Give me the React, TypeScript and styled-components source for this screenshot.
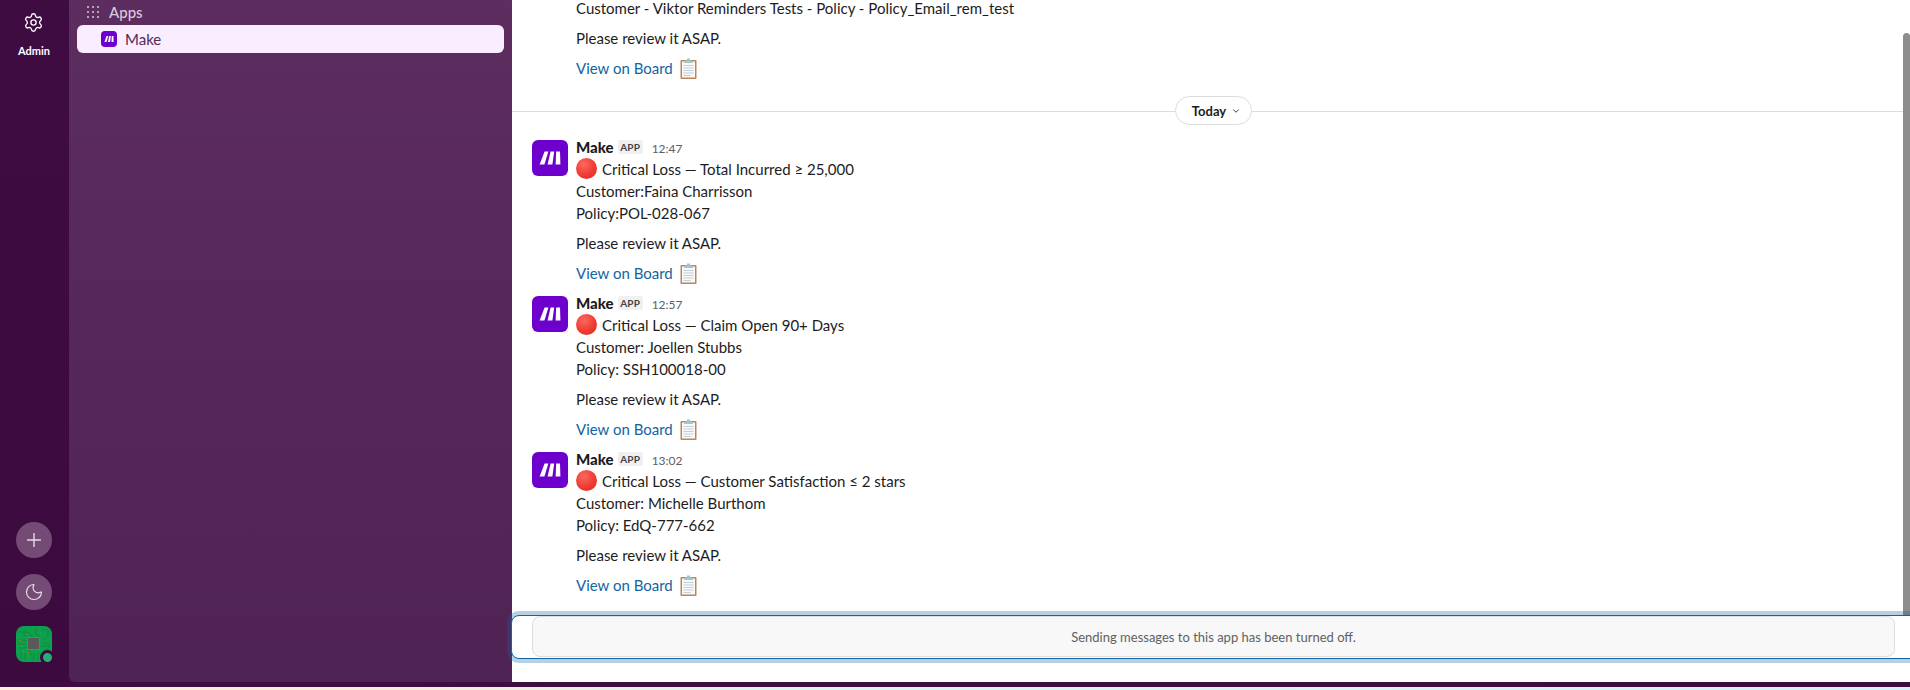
import React from 'react';
import styled, { createGlobalStyle } from 'styled-components';
import { Settings, Plus, Moon, ChevronDown } from 'lucide-react';

const GlobalStyle = createGlobalStyle`
  html, body {
    margin: 0;
    padding: 0;
    height: 100%;
    overflow: hidden;
    background: #fff;
  }
  * { box-sizing: border-box; }
  #root { height: 100%; }
`;

const Page = styled.div`
  width: 1910px;
  height: 690px;
  display: flex;
  flex-direction: column;
  overflow: hidden;
  font-family: Lato, 'Noto Sans', sans-serif;
  color: #1d1c1d;
  font-size: 15px;
`;

const Workspace = styled.div`
  height: 682px;
  flex: none;
  display: flex;
  background: linear-gradient(180deg, #3f0c41 0%, #3d0a3f 100%);
`;

const BottomEdge = styled.div`
  height: 5px;
  flex: none;
  background: #3f0c41;
`;

const BrowserEdge = styled.div`
  flex: 1;
  background: linear-gradient(90deg, #fdeedd 0%, #f4ecdc 22%, #dcf3ee 40%, #d6f2f6 100%);
`;

const Rail = styled.nav`
  width: 69px;
  flex: none;
  display: flex;
  flex-direction: column;
  align-items: center;
  padding: 12px 1px 20px 0;
`;

const RailItem = styled.div`
  display: flex;
  flex-direction: column;
  align-items: center;
  gap: 11px;
  color: #fff;
  font-size: 11px;
  font-weight: 700;
  line-height: 13px;
`;

const RailBottom = styled.div`
  margin-top: auto;
  display: flex;
  flex-direction: column;
  align-items: center;
  gap: 16px;
`;

const RoundButton = styled.div`
  width: 36px;
  height: 36px;
  border-radius: 50%;
  background: #734b75;
  color: #eadcec;
  display: flex;
  align-items: center;
  justify-content: center;
`;

const UserTile = styled.div`
  position: relative;
  width: 36px;
  height: 36px;
`;

const TileArt = styled.svg`
  display: block;
  border-radius: 8px;
`;

const Presence = styled.span`
  position: absolute;
  right: -3px;
  bottom: -3px;
  width: 15px;
  height: 15px;
  border-radius: 50%;
  background: #2bac76;
  border: 3px solid #3d0a3f;
`;

const Sidebar = styled.aside`
  width: 443px;
  flex: none;
  border-bottom-left-radius: 6px;
  background: linear-gradient(180deg, #5c2d5e 0%, #4f2354 100%);
  display: flex;
  flex-direction: column;
  padding: 0 8px;
`;

const SectionHead = styled.div`
  height: 23px;
  margin-bottom: 2px;
  display: flex;
  align-items: center;
  gap: 10px;
  padding-left: 10px;
  color: #dcc9df;
  font-size: 15px;
  font-weight: 500;
`;

const ChannelRow = styled.div`
  height: 28px;
  border-radius: 6px;
  background: #f9edff;
  color: #4f2a55;
  display: flex;
  align-items: center;
  gap: 8px;
  padding-left: 24px;
  font-size: 15px;
`;

const ChannelIcon = styled.span`
  width: 16px;
  height: 16px;
  border-radius: 4px;
  background: #6d00cc;
  display: flex;
  align-items: center;
  justify-content: center;
`;

const Main = styled.main`
  flex: 1;
  min-width: 0;
  background: #fff;
  display: flex;
  flex-direction: column;
  position: relative;
`;

const Scrollbar = styled.div`
  position: absolute;
  right: 0;
  top: 33px;
  height: 582px;
  width: 7px;
  background: #8d8d8d;
  border-radius: 4px 4px 0 0;
`;

const Feed = styled.div`
  height: 611px;
  flex: none;
  overflow: hidden;
  display: flex;
  flex-direction: column;
  justify-content: flex-end;
  padding-bottom: 15px;
`;

const Message = styled.article`
  display: flex;
  gap: 8px;
  padding: 0 20px;
  & + & { margin-top: 8px; }
`;

const Body = styled.div<{ $indent?: boolean }>`
  min-width: 0;
  margin-left: ${({ $indent }) => ($indent ? '44px' : '0')};
`;

const AvatarBox = styled.div`
  width: 36px;
  height: 36px;
  flex: none;
  margin-top: 4px;
  border-radius: 6px;
  background: #6d00cc;
  display: flex;
  align-items: center;
  justify-content: center;
`;

const Meta = styled.div`
  height: 22px;
  display: flex;
  align-items: center;
`;

const Name = styled.span`
  font-weight: 900;
  font-size: 15px;
`;

const AppBadge = styled.span`
  margin-left: 4px;
  width: 25px;
  height: 14px;
  border-radius: 2px;
  background: #f0f0f0;
  color: #454245;
  font-size: 10px;
  font-weight: 700;
  letter-spacing: 0.2px;
  display: flex;
  align-items: center;
  justify-content: center;
`;

const Time = styled.span`
  margin-left: 9px;
  margin-top: 3px;
  font-size: 12px;
  color: #616061;
`;

const Line = styled.div<{ $gap?: boolean }>`
  line-height: 22px;
  height: 22px;
  display: flex;
  align-items: center;
  white-space: pre;
  margin-top: ${({ $gap }) => ($gap ? '8px' : '0')};
`;

const BoardLink = styled.a`
  color: #1264a3;
  text-decoration: none;
  margin-right: 7px;
`;

const RedDot = styled.span`
  width: 21px;
  height: 21px;
  flex: none;
  margin: -2px 5px 0 0;
  border-radius: 50%;
  background: radial-gradient(circle at 38% 30%, #fb6a5f 0%, #ef3b33 55%, #d92a24 100%);
`;

const DayDivider = styled.div`
  position: relative;
  display: flex;
  justify-content: center;
  align-items: center;
  height: 30px;
  margin: 17px 0 11px;
  padding-left: 4px;
  &::before {
    content: '';
    position: absolute;
    left: 0;
    right: 0;
    top: 15px;
    height: 1px;
    background: #dddddd;
  }
`;

const DayPill = styled.div`
  position: relative;
  width: 77px;
  height: 29px;
  border-radius: 15px;
  border: 1px solid #dddddd;
  background: #fff;
  display: flex;
  align-items: center;
  justify-content: center;
  gap: 5px;
  padding-left: 7px;
  font-size: 13px;
  font-weight: 700;
  color: #1d1c1d;
`;

const Composer = styled.div`
  position: relative;
  z-index: 1;
  height: 44px;
  flex: none;
  margin: 4px -20px 0 -1px;
  border-radius: 8px;
  border: 1px solid #1264a3;
  box-shadow: 0 0 0 4px rgba(18, 100, 163, 0.3);
  background: #fff;
  display: flex;
  align-items: flex-start;
  padding: 0 34px 0 20px;
`;

const ComposerNotice = styled.div`
  flex: 1;
  height: 41px;
  border-radius: 8px;
  border: 1px solid #dddddd;
  background: #f8f8f8;
  color: #616061;
  font-size: 13px;
  display: flex;
  align-items: center;
  justify-content: center;
`;

const MakeMark = ({ size }: { size: number }) => (
  <svg width={size} height={size} viewBox="0 0 36 36">
    <path d="M12.6 11.5 L16.4 11.5 L12.4 24.5 L7.6 24.5 Z" fill="#fff" />
    <path d="M18.6 11.5 L22.2 11.5 L20.4 24.5 L15.6 24.5 Z" fill="#fff" />
    <path d="M24.2 11.5 L28 11.5 L28.4 24.5 L23.6 24.5 Z" fill="#fff" />
  </svg>
);

const Clipboard = () => (
  <svg width="17" height="21" viewBox="0 0 17 21">
    <rect x="0.5" y="2" width="16" height="19" rx="1" fill="#c08552" />
    <rect x="2" y="3.5" width="13" height="16" fill="#f7f8f9" />
    <rect x="3.5" y="7" width="10" height="1" fill="#c5ced6" />
    <rect x="3.5" y="9.5" width="10" height="1" fill="#c5ced6" />
    <rect x="3.5" y="12" width="10" height="1" fill="#c5ced6" />
    <rect x="3.5" y="14.5" width="10" height="1" fill="#c5ced6" />
    <rect x="3.5" y="17" width="7" height="1" fill="#c5ced6" />
    <path d="M4 5 L5 2.5 L7 2.5 L7 0.5 L10 0.5 L10 2.5 L12 2.5 L13 5 Z" fill="#9fc6d4" />
  </svg>
);

const CircuitTile = () => (
  <TileArt width="36" height="36" viewBox="0 0 36 36">
    <rect width="36" height="36" fill="#0ba14d" />
    <g stroke="#1f7a38" strokeWidth="0.7" fill="none">
      <path d="M3 6 H12 L16 11 M8 3 V9 L14 13 M20 2 V8 L24 11 M26 4 H32 V10 L27 14" />
      <path d="M2 14 H9 L12 17 M2 18 H10 M2 22 H9 L12 20 M5 26 V34 M9 27 V35 M13 25 L16 30 V36" />
      <path d="M26 17 H34 M26 20 H34 L30 24 M27 23 L34 28 M22 27 V35 M25 27 L28 35 M18 27 V33" />
    </g>
    <g fill="#c97a17">
      <rect x="4" y="14" width="1" height="1" />
      <rect x="5" y="20" width="1" height="1" />
      <rect x="12" y="26" width="1" height="1" />
      <rect x="7" y="25" width="1" height="1" />
      <rect x="24" y="7" width="1" height="1" />
    </g>
    <rect x="11" y="11" width="13" height="13" fill="#8a7a2e" />
    <rect x="12" y="12" width="11" height="11" fill="#5a5a5a" />
  </TileArt>
);

type Item = { title: string; customer: string; policy: string; time: string };

const items: Item[] = [
  { title: 'Critical Loss — Total Incurred ≥ 25,000', customer: 'Customer:Faina Charrisson', policy: 'Policy:POL-028-067', time: '12:47' },
  { title: 'Critical Loss — Claim Open 90+ Days', customer: 'Customer: Joellen Stubbs', policy: 'Policy: SSH100018-00', time: '12:57' },
  { title: 'Critical Loss — Customer Satisfaction ≤ 2 stars', customer: 'Customer: Michelle Burthom', policy: 'Policy: EdQ-777-662', time: '13:02' },
];

const ReviewLines = () => (
  <>
    <Line $gap>Please review it ASAP.</Line>
    <Line $gap>
      <BoardLink href="#">View on Board</BoardLink>
      <Clipboard />
    </Line>
  </>
);

const App: React.FC = () => (
  <Page>
    <GlobalStyle />
    <Workspace>
      <Rail>
        <RailItem>
          <Settings size={21} strokeWidth={1.5} />
          Admin
        </RailItem>
        <RailBottom>
          <RoundButton>
            <Plus size={22} strokeWidth={1.5} />
          </RoundButton>
          <RoundButton>
            <Moon size={20} strokeWidth={1.4} />
          </RoundButton>
          <UserTile>
            <CircuitTile />
            <Presence />
          </UserTile>
        </RailBottom>
      </Rail>
      <Sidebar>
        <SectionHead>
          <svg width="12" height="12" viewBox="0 0 12 12" fill="#dcc9df">
            {[1, 6, 11].map((y) =>
              [1, 6, 11].map((x) => <circle key={`${x}-${y}`} cx={x} cy={y} r="1" />)
            )}
          </svg>
          Apps
        </SectionHead>
        <ChannelRow>
          <ChannelIcon>
            <MakeMark size={16} />
          </ChannelIcon>
          Make
        </ChannelRow>
      </Sidebar>
      <Main>
        <Feed>
          <Message>
            <Body $indent>
              <Line>Customer - Viktor Reminders Tests - Policy - Policy_Email_rem_test</Line>
              <ReviewLines />
            </Body>
          </Message>
          <DayDivider>
            <DayPill>
              Today
              <ChevronDown size={10} strokeWidth={2} />
            </DayPill>
          </DayDivider>
          {items.map((item) => (
            <Message key={item.time}>
              <AvatarBox>
                <MakeMark size={36} />
              </AvatarBox>
              <Body>
                <Meta>
                  <Name>Make</Name>
                  <AppBadge>APP</AppBadge>
                  <Time>{item.time}</Time>
                </Meta>
                <Line>
                  <RedDot />
                  {item.title}
                </Line>
                <Line>{item.customer}</Line>
                <Line>{item.policy}</Line>
                <ReviewLines />
              </Body>
            </Message>
          ))}
        </Feed>
        <Composer>
          <ComposerNotice>Sending messages to this app has been turned off.</ComposerNotice>
        </Composer>
        <Scrollbar />
      </Main>
    </Workspace>
    <BottomEdge />
    <BrowserEdge />
  </Page>
);

export default App;
